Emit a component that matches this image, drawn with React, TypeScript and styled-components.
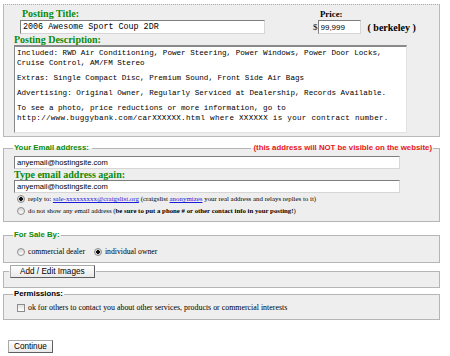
import React from 'react';
import styled, { createGlobalStyle } from 'styled-components';

const GlobalStyle = createGlobalStyle`
  html, body {
    margin: 0;
    padding: 0;
    background: #fff;
  }
  body {
    font-family: "Liberation Serif", "Times New Roman", serif;
    color: #000;
  }
`;

const App: React.FC = () => {
  return (
    <Page>
      <GlobalStyle />

      {/* titulo, preco e descricao */}
      <TopPanel>
        <HeadRow>
          <TitleCol>
            <GreenLabel $indent={8} $lh={12}>Posting Title:</GreenLabel>
            <TitleInput readOnly defaultValue="2006 Awesome Sport Coup 2DR" />
          </TitleCol>
          <PriceCol>
            <PriceLabel>Price:</PriceLabel>
            <PriceRow>
              <span>$</span>
              <PriceInput readOnly defaultValue="99,999" />
              <Area>( berkeley )</Area>
            </PriceRow>
          </PriceCol>
        </HeadRow>
        <GreenLabel $lh={11}>Posting Description:</GreenLabel>
        <DescBox>
          <Para>
            Included: RWD Air Conditioning, Power Steering, Power Windows, Power Door Locks,
            <br />
            Cruise Control, AM/FM Stereo
          </Para>
          <Para>Extras: Single Compact Disc, Premium Sound, Front Side Air Bags</Para>
          <Para>Advertising: Original Owner, Regularly Serviced at Dealership, Records Available.</Para>
          <Para>
            To see a photo, price reductions or more information, go to
            <br />
            <UrlLine>http://www.buggybank.com/carXXXXXX.html where XXXXXX is your contract number.</UrlLine>
          </Para>
        </DescBox>
      </TopPanel>

      {/* email */}
      <Box $gap={6} $pb={4}>
        <Legend $color="#0b8a0b">
          <LegendRow>
            <span>Your Email address:</span>
            <LegendLine />
            <Warning>(this address will NOT be visible on the website)</Warning>
          </LegendRow>
        </Legend>
        <EmailInput readOnly defaultValue="anyemail@hostingsite.com" $top={3} />
        <GreenLabel $lh={11}>Type email address again:</GreenLabel>
        <EmailInput readOnly defaultValue="anyemail@hostingsite.com" $top={0} />
        <OptionRow $size={6.9}>
          <Radio $checked />
          <span>
            reply to: <Link>sale-xxxxxxxxx@craigslist.org</Link> (craigslist <Link>anonymizes</Link> your real
            address and relays replies to it)
          </span>
        </OptionRow>
        <OptionRow $size={6.8}>
          <Radio />
          <span>
            do not show any email address (<b>be sure to put a phone # or other contact info in your posting!</b>)
          </span>
        </OptionRow>
      </Box>

      {/* vendedor */}
      <Box $gap={8} $pb={4}>
        <Legend $color="#0b8a0b">For Sale By:</Legend>
        <OptionRow $top={6} $size={7.7}>
          <Radio />
          <Choice>commercial dealer</Choice>
          <Radio $checked />
          <span>individual owner</span>
        </OptionRow>
      </Box>

      {/* imagens */}
      <Box $gap={2} $pb={9}>
        <ButtonLegend>
          <Button>Add / Edit Images</Button>
        </ButtonLegend>
      </Box>

      {/* permissoes */}
      <Box $gap={1} $pb={5}>
        <Legend $color="#000">Permissions:</Legend>
        <OptionRow $top={3} $size={7.9}>
          <Check />
          <span>ok for others to contact you about other services, products or commercial interests</span>
        </OptionRow>
      </Box>

      <ContinueButton>Continue</ContinueButton>
    </Page>
  );
};

export default App;

// estilos
const Page = styled.div`
  padding: 4px 0 2px 3px;
  width: 437px;
`;

const TopPanel = styled.div`
  box-sizing: border-box;
  width: 437px;
  background: #eeeeee;
  border: 1px solid #b9b9b9;
  border-top: 1px dotted #a8a8a8;
  padding: 3px 0 3px 10px;
`;

const HeadRow = styled.div`
  display: flex;
  align-items: flex-start;
`;

const TitleCol = styled.div`
  width: 251px;
`;

const GreenLabel = styled.div<{ $indent?: number; $lh: number }>`
  padding-left: ${(p) => p.$indent ?? 0}px;
  font-family: "Liberation Serif", "Times New Roman", serif;
  font-weight: bold;
  font-size: 10px;
  line-height: ${(p) => p.$lh}px;
  color: #0b8a0b;
`;

const inputBase = `
  display: block;
  box-sizing: border-box;
  margin: 0;
  padding: 0 2px;
  background: #fff;
  border: 1px solid;
  border-color: #7d7d7d #d6d6d6 #d6d6d6 #7d7d7d;
  outline: none;
  color: #000;
`;

const TitleInput = styled.input`
  ${inputBase}
  margin-left: 6px;
  width: 245px;
  height: 14px;
  font-family: "Liberation Mono", "Courier New", monospace;
  font-size: 8.4px;
`;

const PriceCol = styled.div`
  margin-left: 48px;
`;

const PriceLabel = styled.div`
  padding-left: 7px;
  font-weight: bold;
  font-size: 8.8px;
  line-height: 12px;
`;

const PriceRow = styled.div`
  display: flex;
  align-items: center;
  height: 14px;
  font-size: 9px;
`;

const PriceInput = styled.input`
  ${inputBase}
  width: 43px;
  height: 14px;
  font-family: "Liberation Sans", Arial, sans-serif;
  font-size: 8px;
`;

const Area = styled.span`
  margin-left: 7px;
  font-weight: bold;
  font-size: 10px;
`;

const DescBox = styled.div`
  box-sizing: border-box;
  width: 393px;
  height: 88px;
  padding: 1px 2px;
  background: #fff;
  border: 1px solid;
  border-color: #8a8a8a #e2e2e2 #e2e2e2 #8a8a8a;
  border-top-width: 2px;
  font-family: "Liberation Mono", "Courier New", monospace;
  font-size: 7.6px;
  line-height: 10px;
  white-space: nowrap;
  overflow: hidden;
`;

const Para = styled.p`
  margin: 0 0 5px;
`;

const UrlLine = styled.span`
  letter-spacing: 0.27px;
`;

const Box = styled.fieldset<{ $gap: number; $pb: number }>`
  box-sizing: border-box;
  width: 437px;
  min-width: 0;
  margin: ${(p) => p.$gap}px 0 0;
  padding: 0 0 ${(p) => p.$pb}px 10px;
  background: #eeeeee;
  border: 1px solid #b5b5b5;
`;

const Legend = styled.legend<{ $color: string }>`
  padding: 0 1px;
  margin-left: -1px;
  font-family: "Liberation Sans", Arial, sans-serif;
  font-weight: bold;
  font-size: 7.8px;
  line-height: 10px;
  height: 10px;
  color: ${(p) => p.$color};
  white-space: nowrap;
`;

const ButtonLegend = styled.legend`
  padding: 0 1px;
  margin-left: -5px;
  font-size: 0;
  line-height: 0;
`;

const LegendRow = styled.div`
  display: flex;
  align-items: center;
  width: 418px;
  height: 10px;
`;

const LegendLine = styled.div`
  flex: 1;
  height: 1px;
  margin: 1px 3px 0;
  background: #b5b5b5;
`;

const Warning = styled.span`
  color: #e8151b;
`;

const EmailInput = styled.input<{ $top: number }>`
  ${inputBase}
  margin-top: ${(p) => p.$top}px;
  width: 386px;
  height: 13px;
  font-family: "Liberation Sans", Arial, sans-serif;
  font-size: 7.6px;
`;

const OptionRow = styled.div<{ $top?: number; $size: number }>`
  display: flex;
  align-items: center;
  gap: 3px;
  height: 12px;
  margin-top: ${(p) => p.$top ?? 0}px;
  padding-left: 3px;
  font-size: ${(p) => p.$size}px;
  line-height: 12px;
  white-space: nowrap;
`;

const Choice = styled.span`
  margin-right: 6px;
`;

const Link = styled.span`
  color: #1a1ad8;
  text-decoration: underline;
`;

const Radio = styled.span<{ $checked?: boolean }>`
  box-sizing: border-box;
  width: 8px;
  height: 8px;
  border-radius: 50%;
  border: 1px solid #8c8c8c;
  background: ${(p) =>
    p.$checked
      ? 'radial-gradient(circle, #111 0 1.6px, #d0d0d0 2px, #f4f4f4 100%)'
      : 'linear-gradient(#d6d6d6, #fdfdfd)'};
  flex: none;
`;

const Check = styled.span`
  box-sizing: border-box;
  width: 8px;
  height: 8px;
  border: 1px solid #8c8c8c;
  background: linear-gradient(#e2e2e2, #fff);
  flex: none;
`;

const Button = styled.button`
  display: block;
  box-sizing: border-box;
  height: 13px;
  padding: 0 9px;
  margin: 0;
  font-family: "Liberation Sans", Arial, sans-serif;
  font-size: 8.2px;
  line-height: 11px;
  color: #000;
  background: linear-gradient(#ffffff, #e9e9e9);
  border: 1px solid #a9a9a9;
  border-right-color: #5e5e5e;
  border-bottom-color: #5e5e5e;
  border-radius: 0;
`;

const ContinueButton = styled(Button)`
  margin: 20px 0 0 5px;
  padding: 0 5px;
`;
